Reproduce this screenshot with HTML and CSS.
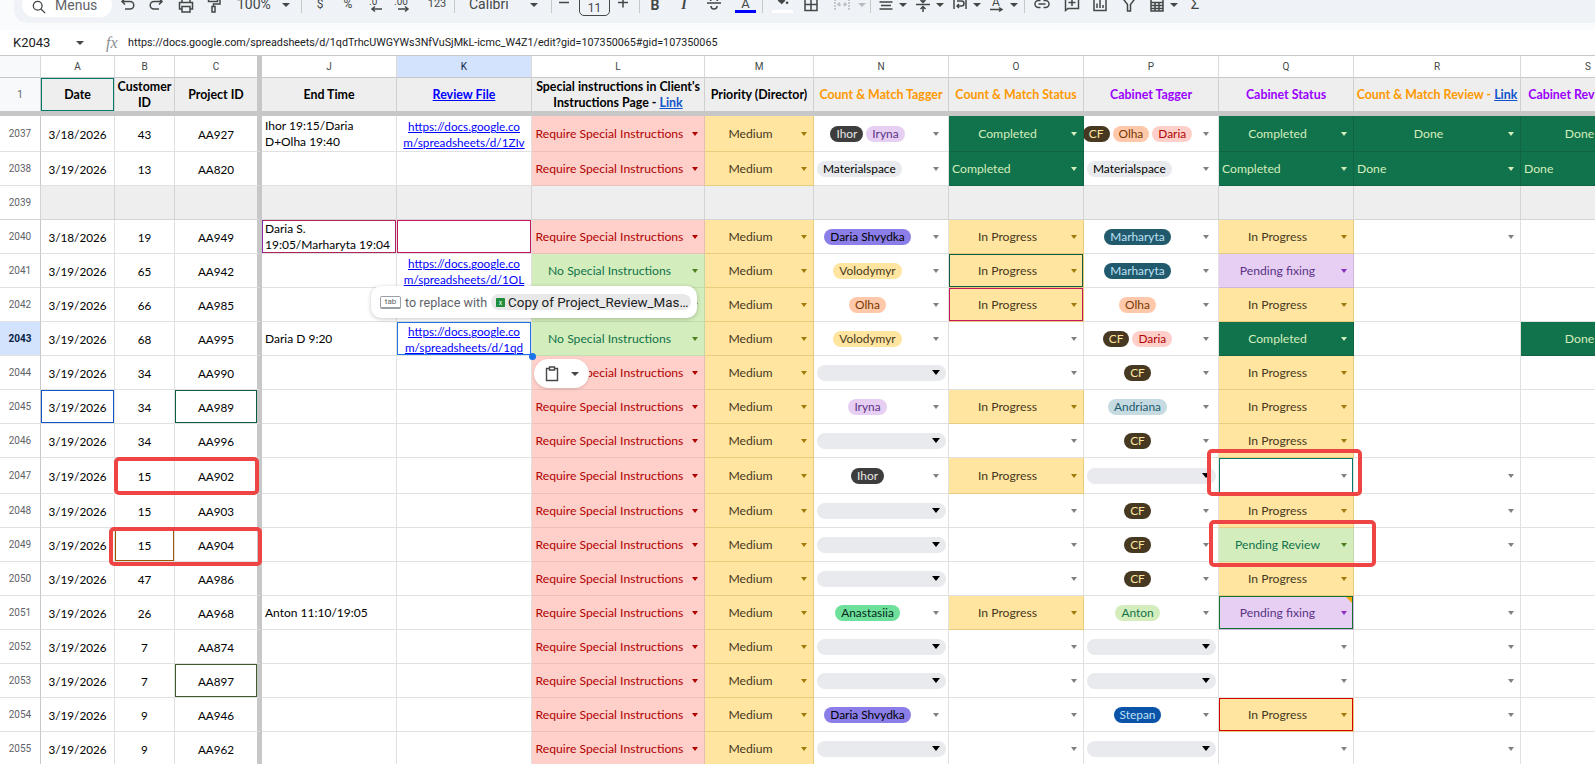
FILE: index.html
```html
<!DOCTYPE html>
<html lang="en">
<head>
<meta charset="utf-8">
<title>Project sheet</title>
<link rel="stylesheet" href="styles.css">
</head>
<body>
<div class="page">
  <div class="topzone">
    <div class="toolbar">
      <div class="pill"><svg class="ic" viewBox="0 0 16 16"><path d="M10.500 10.500L15 15M11.500 6.500a5 5 0 1 1-10 0a5 5 0 0 1 10 0z"/></svg><span>Menus</span></div>
      <svg class="ic" viewBox="0 0 16 16"><path d="M5 1.500L2 4.500L5 7.500M2 4.500H10a3.800 3.800 0 0 1 0 7.600H5"/></svg>
      <svg class="ic" viewBox="0 0 16 16"><path d="M11 1.500L14 4.500L11 7.500M14 4.500H6a3.800 3.800 0 0 0 0 7.600H11"/></svg>
      <svg class="ic" viewBox="0 0 16 16"><path d="M4 5V1h8v4M4 12H1.500V5.500h13V12H12M4 9.500h8V15H4z"/></svg>
      <svg class="ic" viewBox="0 0 16 16"><path d="M2.500 0.500h9v4h-9zM11.500 2.500h2.500v4.500H7.500v2.500M6 9.500h3v5.500H6z"/></svg>
      <span class="tt">100%</span>
      <i class="tv"></i>
      <i class="sep"></i>
      <span class="tt sm box16">$</span>
      <span class="tt sm box16">%</span>
      <svg class="ic wide" viewBox="0 0 20 16"><text x="4" y="8" class="svt">.0</text><path d="M17 12H7M10 9.500L7 12l3 2.500"/></svg>
      <svg class="ic wide" viewBox="0 0 20 16"><text x="1" y="8" class="svt">.00</text><path d="M5 12h10M12 9.500l3 2.500-3 2.500"/></svg>
      <span class="tt xs">123</span>
      <i class="sep"></i>
      <span class="tt">Calibri</span>
      <i class="tv"></i>
      <i class="sep"></i>
      <svg class="ic small" viewBox="0 0 12 16"><path d="M1 5.500h10"/></svg>
      <div class="fsize">11</div>
      <svg class="ic small" viewBox="0 0 12 16"><path d="M1 5.500h10M6 .5v10"/></svg>
      <i class="sep"></i>
      <b class="tl bold">B</b>
      <i class="tl ital">I</i>
      <svg class="ic" viewBox="0 0 16 16"><path d="M1 6h14M4.500 4c.5-3 6.500-3 7 0M5 9c0 4 6 4 6 0"/></svg>
      <div class="tcolor"><span>A</span><i class="bar blue"></i></div>
      <i class="sep"></i>
      <div class="tcolor wide"><svg class="ic" viewBox="0 0 16 16"><path class="fl" d="M5 0L1.500 4.500L6.500 9L11 4.500z"/><circle class="fl" cx="13" cy="7" r="1.600"/></svg><i class="bar white"></i></div>
      <svg class="ic" viewBox="0 0 16 16"><path d="M2 1.500h12v12H2zM2 7.500h12M8 1.500v12"/></svg>
      <svg class="ic off" viewBox="0 0 16 16"><path d="M2 3H1v9h1M14 3h1v9h-1M3 7.500h3.500M4.500 5.500l2 2-2 2M13 7.500H9.500M11.500 5.500l-2 2 2 2" stroke-dasharray="2 1"/></svg>
      <i class="tv off"></i>
      <i class="sep"></i>
      <svg class="ic" viewBox="0 0 16 16"><path d="M3 1.500h10M1.500 5h13M3 8.500h10M1.500 12h13"/></svg>
      <i class="tv"></i>
      <svg class="ic" viewBox="0 0 16 16"><path d="M1 7.500h14M8 0v5M5.500 3l2.500 2.500L10.500 3M8 15v-5M5.500 12l2.500-2.500 2.500 2.500"/></svg>
      <i class="tv"></i>
      <svg class="ic" viewBox="0 0 16 16"><path d="M2 0v12M14 0v12M5 4h4.500a2.500 2.500 0 0 1 0 5H5M7 7L5 9l2 2" /></svg>
      <i class="tv"></i>
      <svg class="ic" viewBox="0 0 16 16"><text x="3" y="9" class="svt big">A</text><path d="M1 12.500h11M10 10.500l3 2-3 2"/></svg>
      <i class="tv"></i>
      <i class="sep"></i>
      <svg class="ic" viewBox="0 0 16 16"><path d="M6.500 3.500H4.500a3.500 3.500 0 0 0 0 7h2M9.500 3.500h2a3.500 3.500 0 0 1 0 7h-2M4.500 7h7"/></svg>
      <svg class="ic" viewBox="0 0 16 16"><path d="M1.500 0v13.500L4 11.500h10.500V0M8 2v7M4.500 5.500h7"/></svg>
      <svg class="ic" viewBox="0 0 16 16"><path d="M2 0v13.500h12V0M5 11V6.500M8 11V3M11 11V8"/></svg>
      <svg class="ic" viewBox="0 0 16 16"><path d="M1.500 1L6.500 7.500V14h3V7.500L14.500 1z"/></svg>
      <svg class="ic" viewBox="0 0 16 16"><path d="M2 0h12v14H2zM2 5.500h12M2 8.500h12M2 11.500h12M6 5.500v8.500M10 5.500v8.500"/></svg>
      <i class="tv"></i>
      <span class="tt sigma">Σ</span>
    </div>
  </div>
  <div class="fbar">
    <span class="nm">K2043</span>
    <i class="tv"></i>
    <i class="fx">fx</i>
    <span class="url">https://docs.google.com/spreadsheets/d/1qdTrhcUWGYWs3NfVuSjMkL-icmc_W4Z1/edit?gid=107350065#gid=107350065</span>
  </div>
  <div class="sheet">
    <div class="row lets">
      <div class="c rn corner"></div><div class="c">A</div><div class="c">B</div><div class="c fz">C</div><div class="c">J</div><div class="c on">K</div><div class="c">L</div><div class="c">M</div><div class="c">N</div><div class="c">O</div><div class="c">P</div><div class="c">Q</div><div class="c">R</div><div class="c">S</div>
    </div>
    <div class="row hd">
      <div class="c rn">1</div><div class="c cur-a">Date</div><div class="c"><span>Customer<br>ID</span></div><div class="c fz">Project ID</div><div class="c">End Time</div><div class="c"><a>Review File</a></div><div class="c"><span>Special instructions in Client's<br>Instructions Page - <a class="lk">Link</a></span></div><div class="c">Priority (Director)</div><div class="c or">Count &amp; Match Tagger</div><div class="c or">Count &amp; Match Status</div><div class="c pu">Cabinet Tagger</div><div class="c pu">Cabinet Status</div><div class="c or"><span>Count &amp; Match Review - <a class="lk">Link</a></span></div><div class="c pu"><span>Cabinet Review - <a class="lk">Link</a></span></div>
    </div>
    <div class="hbar"></div>

    <div class="row first">
      <div class="c rn">2037</div><div class="c m">3/18/2026</div><div class="c m">43</div><div class="c m fz">AA927</div><div class="c tx"><span>Ihor 19:15/Daria<br>D+Olha 19:40</span></div><div class="c lnk"><a>https://docs.google.co<br>m/spreadsheets/d/1ZIv</a></div>
      <div class="c dd req"><span>Require Special Instructions</span><i class="v"></i></div><div class="c dd med"><span>Medium</span><i class="v"></i></div>
      <div class="c dd ch"><div class="chips"><b class="chip ihor">Ihor</b><b class="chip iry">Iryna</b></div><i class="v"></i></div>
      <div class="c dd ok"><span>Completed</span><i class="v"></i></div>
      <div class="c dd ch"><div class="chips"><b class="chip cf">CF</b><b class="chip olh">Olha</b><b class="chip dar">Daria</b></div><i class="v"></i></div>
      <div class="c dd ok"><span>Completed</span><i class="v"></i></div><div class="c dd ok"><span>Done</span><i class="v"></i></div><div class="c dd ok"><span>Done</span><i class="v"></i></div>
    </div>
    <div class="row">
      <div class="c rn">2038</div><div class="c m">3/19/2026</div><div class="c m">13</div><div class="c m fz">AA820</div><div class="c"></div><div class="c"></div>
      <div class="c dd req"><span>Require Special Instructions</span><i class="v"></i></div><div class="c dd med"><span>Medium</span><i class="v"></i></div>
      <div class="c dd ch lft"><div class="chips"><b class="chip mat">Materialspace</b></div><i class="v"></i></div>
      <div class="c dd ok lft"><span>Completed</span><i class="v"></i></div>
      <div class="c dd ch lft"><div class="chips"><b class="chip mat">Materialspace</b></div><i class="v"></i></div>
      <div class="c dd ok lft"><span>Completed</span><i class="v"></i></div><div class="c dd ok lft"><span>Done</span><i class="v"></i></div><div class="c dd ok lft"><span>Done</span><i class="v"></i></div>
    </div>
    <div class="row gray">
      <div class="c rn">2039</div><div class="c"></div><div class="c"></div><div class="c fz"></div><div class="c"></div><div class="c"></div><div class="c"></div><div class="c"></div><div class="c"></div><div class="c"></div><div class="c"></div><div class="c"></div><div class="c"></div><div class="c"></div>
    </div>
    <div class="row">
      <div class="c rn">2040</div><div class="c m">3/18/2026</div><div class="c m">19</div><div class="c m fz">AA949</div><div class="c tx mark-pl"><span>Daria S.<br>19:05/Marharyta 19:04</span></div><div class="c mark-cr"></div>
      <div class="c dd req"><span>Require Special Instructions</span><i class="v"></i></div><div class="c dd med"><span>Medium</span><i class="v"></i></div>
      <div class="c dd ch"><div class="chips"><b class="chip shv">Daria Shvydka</b></div><i class="v"></i></div>
      <div class="c dd med"><span>In Progress</span><i class="v"></i></div>
      <div class="c dd ch"><div class="chips"><b class="chip mar">Marharyta</b></div><i class="v"></i></div>
      <div class="c dd med"><span>In Progress</span><i class="v"></i></div><div class="c dd"><span></span><i class="v"></i></div><div class="c"></div>
    </div>
    <div class="row">
      <div class="c rn">2041</div><div class="c m">3/19/2026</div><div class="c m">65</div><div class="c m fz">AA942</div><div class="c"></div><div class="c lnk"><a>https://docs.google.co<br>m/spreadsheets/d/1OL</a></div>
      <div class="c dd no"><span>No Special Instructions</span><i class="v"></i></div><div class="c dd med"><span>Medium</span><i class="v"></i></div>
      <div class="c dd ch"><div class="chips"><b class="chip vol">Volodymyr</b></div><i class="v"></i></div>
      <div class="c dd med mark-dg"><span>In Progress</span><i class="v"></i></div>
      <div class="c dd ch"><div class="chips"><b class="chip mar">Marharyta</b></div><i class="v"></i></div>
      <div class="c dd fix"><span>Pending fixing</span><i class="v"></i></div><div class="c"></div><div class="c"></div>
    </div>
    <div class="row">
      <div class="c rn">2042</div><div class="c m">3/19/2026</div><div class="c m">66</div><div class="c m fz">AA985</div><div class="c"></div><div class="c"></div>
      <div class="c dd no"><span>No Special Instructions</span><i class="v"></i></div><div class="c dd med"><span>Medium</span><i class="v"></i></div>
      <div class="c dd ch"><div class="chips"><b class="chip olh">Olha</b></div><i class="v"></i></div>
      <div class="c dd med mark-cr"><span>In Progress</span><i class="v"></i></div>
      <div class="c dd ch"><div class="chips"><b class="chip olh">Olha</b></div><i class="v"></i></div>
      <div class="c dd med"><span>In Progress</span><i class="v"></i></div><div class="c"></div><div class="c"></div>
    </div>
    <div class="row sel">
      <div class="c rn">2043</div><div class="c m">3/19/2026</div><div class="c m">68</div><div class="c m fz">AA995</div><div class="c tx">Daria D 9:20</div><div class="c lnk mark-bl"><a>https://docs.google.co<br>m/spreadsheets/d/1qd</a></div>
      <div class="c dd no"><span>No Special Instructions</span><i class="v"></i></div><div class="c dd med"><span>Medium</span><i class="v"></i></div>
      <div class="c dd ch"><div class="chips"><b class="chip vol">Volodymyr</b></div><i class="v"></i></div>
      <div class="c dd"><span></span><i class="v"></i></div>
      <div class="c dd ch"><div class="chips"><b class="chip cf">CF</b><b class="chip dar">Daria</b></div><i class="v"></i></div>
      <div class="c dd ok"><span>Completed</span><i class="v"></i></div><div class="c"></div><div class="c dd ok"><span>Done</span><i class="v"></i></div>
    </div>
    <div class="row">
      <div class="c rn">2044</div><div class="c m">3/19/2026</div><div class="c m">34</div><div class="c m fz">AA990</div><div class="c"></div><div class="c"></div>
      <div class="c dd req"><span>Require Special Instructions</span><i class="v"></i></div><div class="c dd med"><span>Medium</span><i class="v"></i></div>
      <div class="c blank"><div class="epill"><i class="v"></i></div></div>
      <div class="c dd"><span></span><i class="v"></i></div>
      <div class="c dd ch"><div class="chips"><b class="chip cf">CF</b></div><i class="v"></i></div>
      <div class="c dd med"><span>In Progress</span><i class="v"></i></div><div class="c"></div><div class="c"></div>
    </div>
    <div class="row">
      <div class="c rn">2045</div><div class="c m mark-nv">3/19/2026</div><div class="c m">34</div><div class="c m fz mark-dg">AA989</div><div class="c"></div><div class="c"></div>
      <div class="c dd req"><span>Require Special Instructions</span><i class="v"></i></div><div class="c dd med"><span>Medium</span><i class="v"></i></div>
      <div class="c dd ch"><div class="chips"><b class="chip iry">Iryna</b></div><i class="v"></i></div>
      <div class="c dd med"><span>In Progress</span><i class="v"></i></div>
      <div class="c dd ch"><div class="chips"><b class="chip and">Andriana</b></div><i class="v"></i></div>
      <div class="c dd med"><span>In Progress</span><i class="v"></i></div><div class="c"></div><div class="c"></div>
    </div>
    <div class="row">
      <div class="c rn">2046</div><div class="c m">3/19/2026</div><div class="c m">34</div><div class="c m fz">AA996</div><div class="c"></div><div class="c"></div>
      <div class="c dd req"><span>Require Special Instructions</span><i class="v"></i></div><div class="c dd med"><span>Medium</span><i class="v"></i></div>
      <div class="c blank"><div class="epill"><i class="v"></i></div></div>
      <div class="c dd"><span></span><i class="v"></i></div>
      <div class="c dd ch"><div class="chips"><b class="chip cf">CF</b></div><i class="v"></i></div>
      <div class="c dd med"><span>In Progress</span><i class="v"></i></div><div class="c"></div><div class="c"></div>
    </div>
    <div class="row tall">
      <div class="c rn">2047</div><div class="c m">3/19/2026</div><div class="c m">15</div><div class="c m fz">AA902</div><div class="c"></div><div class="c"></div>
      <div class="c dd req"><span>Require Special Instructions</span><i class="v"></i></div><div class="c dd med"><span>Medium</span><i class="v"></i></div>
      <div class="c dd ch"><div class="chips"><b class="chip ihor">Ihor</b></div><i class="v"></i></div>
      <div class="c dd med"><span>In Progress</span><i class="v"></i></div>
      <div class="c blank"><div class="epill"><i class="v"></i></div></div>
      <div class="c dd mark-tl"><span></span><i class="v"></i></div><div class="c dd"><span></span><i class="v"></i></div><div class="c"></div>
    </div>
    <div class="row">
      <div class="c rn">2048</div><div class="c m">3/19/2026</div><div class="c m">15</div><div class="c m fz">AA903</div><div class="c"></div><div class="c"></div>
      <div class="c dd req"><span>Require Special Instructions</span><i class="v"></i></div><div class="c dd med"><span>Medium</span><i class="v"></i></div>
      <div class="c blank"><div class="epill"><i class="v"></i></div></div>
      <div class="c dd"><span></span><i class="v"></i></div>
      <div class="c dd ch"><div class="chips"><b class="chip cf">CF</b></div><i class="v"></i></div>
      <div class="c dd med"><span>In Progress</span><i class="v"></i></div><div class="c dd"><span></span><i class="v"></i></div><div class="c"></div>
    </div>
    <div class="row">
      <div class="c rn">2049</div><div class="c m">3/19/2026</div><div class="c m mark-br">15</div><div class="c m fz">AA904</div><div class="c"></div><div class="c"></div>
      <div class="c dd req"><span>Require Special Instructions</span><i class="v"></i></div><div class="c dd med"><span>Medium</span><i class="v"></i></div>
      <div class="c blank"><div class="epill"><i class="v"></i></div></div>
      <div class="c dd"><span></span><i class="v"></i></div>
      <div class="c dd ch"><div class="chips"><b class="chip cf">CF</b></div><i class="v"></i></div>
      <div class="c dd no"><span>Pending Review</span><i class="v"></i></div><div class="c dd"><span></span><i class="v"></i></div><div class="c"></div>
    </div>
    <div class="row">
      <div class="c rn">2050</div><div class="c m">3/19/2026</div><div class="c m">47</div><div class="c m fz">AA986</div><div class="c"></div><div class="c"></div>
      <div class="c dd req"><span>Require Special Instructions</span><i class="v"></i></div><div class="c dd med"><span>Medium</span><i class="v"></i></div>
      <div class="c blank"><div class="epill"><i class="v"></i></div></div>
      <div class="c dd"><span></span><i class="v"></i></div>
      <div class="c dd ch"><div class="chips"><b class="chip cf">CF</b></div><i class="v"></i></div>
      <div class="c dd med"><span>In Progress</span><i class="v"></i></div><div class="c"></div><div class="c"></div>
    </div>
    <div class="row">
      <div class="c rn">2051</div><div class="c m">3/19/2026</div><div class="c m">26</div><div class="c m fz">AA968</div><div class="c tx">Anton 11:10/19:05</div><div class="c"></div>
      <div class="c dd req"><span>Require Special Instructions</span><i class="v"></i></div><div class="c dd med"><span>Medium</span><i class="v"></i></div>
      <div class="c dd ch"><div class="chips"><b class="chip ana">Anastasiia</b></div><i class="v"></i></div>
      <div class="c dd med"><span>In Progress</span><i class="v"></i></div>
      <div class="c dd ch"><div class="chips"><b class="chip ant">Anton</b></div><i class="v"></i></div>
      <div class="c dd fix mark-gn note"><span>Pending fixing</span><i class="v"></i></div><div class="c dd"><span></span><i class="v"></i></div><div class="c"></div>
    </div>
    <div class="row">
      <div class="c rn">2052</div><div class="c m">3/19/2026</div><div class="c m">7</div><div class="c m fz">AA874</div><div class="c"></div><div class="c"></div>
      <div class="c dd req"><span>Require Special Instructions</span><i class="v"></i></div><div class="c dd med"><span>Medium</span><i class="v"></i></div>
      <div class="c blank"><div class="epill"><i class="v"></i></div></div>
      <div class="c dd"><span></span><i class="v"></i></div>
      <div class="c blank"><div class="epill"><i class="v"></i></div></div>
      <div class="c dd"><span></span><i class="v"></i></div><div class="c dd"><span></span><i class="v"></i></div><div class="c"></div>
    </div>
    <div class="row">
      <div class="c rn">2053</div><div class="c m">3/19/2026</div><div class="c m">7</div><div class="c m fz mark-ol">AA897</div><div class="c"></div><div class="c"></div>
      <div class="c dd req"><span>Require Special Instructions</span><i class="v"></i></div><div class="c dd med"><span>Medium</span><i class="v"></i></div>
      <div class="c blank"><div class="epill"><i class="v"></i></div></div>
      <div class="c dd"><span></span><i class="v"></i></div>
      <div class="c blank"><div class="epill"><i class="v"></i></div></div>
      <div class="c dd"><span></span><i class="v"></i></div><div class="c dd"><span></span><i class="v"></i></div><div class="c"></div>
    </div>
    <div class="row">
      <div class="c rn">2054</div><div class="c m">3/19/2026</div><div class="c m">9</div><div class="c m fz">AA946</div><div class="c"></div><div class="c"></div>
      <div class="c dd req"><span>Require Special Instructions</span><i class="v"></i></div><div class="c dd med"><span>Medium</span><i class="v"></i></div>
      <div class="c dd ch"><div class="chips"><b class="chip shv">Daria Shvydka</b></div><i class="v"></i></div>
      <div class="c dd"><span></span><i class="v"></i></div>
      <div class="c dd ch"><div class="chips"><b class="chip ste">Stepan</b></div><i class="v"></i></div>
      <div class="c dd med mark-rd"><span>In Progress</span><i class="v"></i></div><div class="c dd"><span></span><i class="v"></i></div><div class="c"></div>
    </div>
    <div class="row">
      <div class="c rn">2055</div><div class="c m">3/19/2026</div><div class="c m">9</div><div class="c m fz">AA962</div><div class="c"></div><div class="c"></div>
      <div class="c dd req"><span>Require Special Instructions</span><i class="v"></i></div><div class="c dd med"><span>Medium</span><i class="v"></i></div>
      <div class="c blank"><div class="epill"><i class="v"></i></div></div>
      <div class="c dd"><span></span><i class="v"></i></div>
      <div class="c blank"><div class="epill"><i class="v"></i></div></div>
      <div class="c dd"><span></span><i class="v"></i></div><div class="c dd"><span></span><i class="v"></i></div><div class="c"></div>
    </div>
  </div>

  <div class="hint">
    <span class="key">tab</span>
    <span class="hint-t">to replace with</span>
    <span class="file"><svg class="xl" viewBox="0 0 13 13"><rect width="13" height="13" rx="1"/><text x="6.500" y="10" text-anchor="middle">x</text></svg><span>Copy of Project_Review_Mas…</span></span>
  </div>
  <div class="paste">
    <svg class="clip" viewBox="0 0 16 16"><path d="M5.500 2.500H2.500v12h11v-12h-3M5.500 1h5v3h-5z"/></svg>
    <i class="tv"></i>
  </div>
  <i class="dot"></i>
  <i class="rbox r1"></i>
  <i class="rbox r2"></i>
  <i class="rbox r3"></i>
  <i class="rbox r4"></i>
</div>
</body>
</html>
```
FILE: styles.css
```css
* { box-sizing: border-box; }
html, body { margin: 0; padding: 0; background: #fff; overflow: hidden; }
.page { position: relative; width: 1595px; height: 764px; overflow: hidden; font-family: Lato, "Open Sans", sans-serif; font-size: 11.700px; color: #000; }

/* toolbar */
.topzone { height: 30px; background: #f9fbfd; padding-left: 14px; }
.toolbar { height: 23px; background: #eff3f8; border-bottom-left-radius: 13px; padding-left: 8px; overflow: hidden; display: grid; align-items: start; justify-items: start;
  grid-template-columns: 98px 28px 30px 28px 31px 45px 19px 11px 28px 25px 28px 33px 28px 15px 61px 21px 7px 21px 38px 22px 8px 29px 30px 29px 27px 10px 31px 31px 24px 12px 8px 21px 16px 21px 16px 21px 16px 21px 14px 10px 30px 28px 29px 28px 21px 17px 16px; }
.toolbar > * { margin-top: -3px; }
.ic { width: 16px; height: 16px; fill: none; stroke: #444746; stroke-width: 1.500; display: block; }
.ic.wide { width: 20px; margin-left: 0; }
.ic.small { width: 12px; }
.ic.off { stroke: #b9bcbf; }
.ic .fl { fill: #444746; stroke: none; }
.svt { font-family: Roboto, sans-serif; font-size: 10px; fill: #444746; stroke: none; }
.svt.big { font-size: 12px; }
.pill { width: 90px; height: 24px; margin-top: -7px !important; padding: 0 0 0 10px; background: #fff; border-radius: 12px; display: flex; align-items: center; gap: 9px; color: #5f6368; font-family: Roboto, sans-serif; font-size: 14px; }
.pill .ic { width: 14px; height: 14px; margin-top: 3px; }
.pill span { margin-top: -1px; }
.tt { font-family: Roboto, sans-serif; font-size: 14px; line-height: 16px; color: #444746; white-space: nowrap; }
.toolbar > .tt { margin-top: -4px; }
.tt.sm { font-size: 12px; }
.tt.xs { font-size: 11px; width: 22px; text-align: center; }
.tt.sigma { font-size: 15px; text-align: center; width: 16px; }
.box16 { width: 16px; text-align: center; }
.tv { display: block; width: 0; height: 0; margin-top: 3px; border-left: 4px solid transparent; border-right: 4px solid transparent; border-top: 4px solid #444746; }
.toolbar > .tv { margin-top: 3px; }
.tv.off { border-top-color: #b9bcbf; }
.sep { display: block; width: 1px; height: 20px; background: #c7c7c7; }
.toolbar > .sep { margin-top: 0; height: 13px; }
.fsize { width: 31px; height: 19px; padding-top: 3px; border: 1px solid #444746; border-radius: 0 0 5px 5px; text-align: center; font-family: Roboto, sans-serif; font-size: 12px; line-height: 14px; color: #444746; }
.tl { width: 16px; text-align: center; font-family: "Liberation Serif", serif; font-size: 14px; line-height: 16px; color: #444746; }
.bold { font-family: Roboto, sans-serif; font-weight: 700; }
.ital { font-style: italic; font-weight: 700; }
.tcolor { width: 21px; height: 16px; text-align: center; font-family: Roboto, sans-serif; font-size: 13px; line-height: 14px; color: #444746; display: flex; flex-direction: column; align-items: center; }
.tcolor span { height: 13px; }
.tcolor.wide .ic { height: 13px; flex: none; }
.bar { display: block; width: 21px; height: 3px; flex: none; }
.bar.blue { background: #0000ff; }
.bar.white { background: #fff; }

/* formula bar */
.fbar { height: 25px; display: flex; align-items: center; padding-left: 13px; font-family: Roboto, sans-serif; color: #202124; }
.nm { font-size: 13px; width: 63px; }
.fbar .tv { margin-top: 0; }
.fx { margin-left: 22px; width: 22px; font-family: "Liberation Serif", serif; font-size: 16px; color: #8a8d91; }
.url { font-size: 10.750px; color: #202124; white-space: nowrap; }

/* sheet */
.sheet { border-top: 1px solid #c7c7c7; }
.row { display: grid; grid-template-columns: 41px 74px 60px 87px 135px 135px 173px 109px 135px 135px 135px 135px 167px 135px; height: 34px; width: 1656px; }
.row.first { height: 36px; }
.row.tall { height: 36px; }
.c { border-right: 1px solid #e1e1e1; border-bottom: 1px solid #e1e1e1; min-width: 0; overflow: hidden; padding-top: 1px; display: flex; align-items: center; justify-content: center; text-align: center; line-height: 16px; white-space: nowrap; background: #fff; }
.c.fz { border-right: 5px solid #c7c7c7; }
.rn { border-right: 1px solid #c7c7c7; font-family: Roboto, sans-serif; font-size: 10px; color: #5f6368; padding-top: 0; }
.row.sel .rn { background: #d3e3fd; color: #0b1f44; font-weight: 700; }
.lets { height: 22px; font-family: Roboto, sans-serif; font-size: 10px; color: #444746; }
.lets .c { border-bottom: 1px solid #c7c7c7; border-right-color: #dadada; padding-top: 0; }
.lets .c.fz { border-right-color: #c7c7c7; }
.lets .corner { background: #f8f9fa; }
.lets .on { background: #d3e3fd; color: #0b1f44; }
.hd { height: 33px; font-family: Lato, "Open Sans", sans-serif; font-weight: 700; font-size: 12.400px; }
.hd .c { background: #eeeeee; border-right-color: #d0d0d0; border-bottom: 0; line-height: 16px; }
.hd .c.fz { border-right-color: #c7c7c7; }
.hd .rn { background: #f8f9fa; border-right-color: #c7c7c7; font-family: Roboto, sans-serif; font-weight: 400; font-size: 10px; color: #5f6368; }
.hd a { color: #0000ff; text-decoration: underline; }
.hd a.lk { color: #1155cc; }
.or { color: #ff9900; }
.pu { color: #9900ff; }
.cur-a { box-shadow: inset 0 0 0 1px #00796b; }
.hbar { height: 5px; background: #c7c7c7; }
.gray .c { background: #eeeeee; border-right-color: #d4d4d4; border-bottom-color: #d4d4d4; }
.gray .c.fz { border-right-color: #c7c7c7; }
.gray .rn { background: #fff; }
.tx { justify-content: flex-start; text-align: left; padding-left: 3px; font-size: 12px; }
.lnk a { color: #0000ff; text-decoration: underline; }

/* dropdown cells */
.dd { justify-content: flex-end; }
.dd > span { flex: 1; min-width: 0; text-align: center; white-space: nowrap; font-size: 12.200px; }
.v { display: block; flex: none; width: 0; height: 0; margin: 0 6px 0 5px; border-left: 3.500px solid transparent; border-right: 3.500px solid transparent; border-top: 4px solid #808080; }
.ch .v { margin: 0 9px 0 12px; }
.req { background: #ffcfc9; color: #b10202; border-right-color: #e6bcb6; border-bottom-color: #ecc1bb; }
.req .v { border-top-color: #b10202; }
.no { background: #d4edbc; color: #11734b; border-right-color: #bfd7a9; border-bottom-color: #c4dcae; }
.no .v { border-top-color: #4b7f1f; }
.med { background: #ffe5a0; color: #473821; border-right-color: #e8cb7f; border-bottom-color: #e8cb7f; }
.med .v { border-top-color: #a07b0b; }
.ok { background: #11734b; color: #d4edbc; border-right-color: #0f6543; border-bottom-color: #0f6543; }
.ok .v { border-top-color: #d4edbc; }
.fix { background: #e6cff2; color: #5a3286; border-right-color: #cdb6da; border-bottom-color: #cdb6da; }
.fix .v { border-top-color: #8a2fc0; }
.ok.lft > span { text-align: left; padding-left: 3px; }
.chips { flex: 1; min-width: 0; display: flex; justify-content: center; gap: 3px; }
.lft .chips { justify-content: flex-start; padding-left: 3px; }
.chip { display: block; height: 16px; line-height: 16px; padding: 0 6px; border-radius: 8px; font-weight: 400; font-size: 11.900px; }
.ihor { background: #3d3d3d; color: #e5e5e5; }
.iry { background: #e6cff2; color: #5a3286; }
.cf { background: #473821; color: #ffe5a0; }
.olh { background: #ffc8aa; color: #753800; }
.dar { background: #ffcfc9; color: #b10202; }
.mat { background: #e8eaed; color: #000; }
.shv { background: #8b7ee8; color: #000; }
.mar { background: #215a6c; color: #bfe1f6; }
.vol { background: #ffe5a0; color: #473821; }
.and { background: #c6dbe1; color: #215a6c; }
.ana { background: #6ee09b; color: #06281a; }
.ant { background: #d4edbc; color: #11734b; }
.ste { background: #0a53a8; color: #bfe1f6; }
.blank { padding: 0 2px 0 3px; justify-content: flex-start; }
.epill { width: 129px; height: 16px; border-radius: 8px; background: #e8eaed; display: flex; align-items: center; justify-content: flex-end; }
.epill .v { margin: 0 6px 0 0; border-left-width: 4px; border-right-width: 4px; border-top: 5px solid #000; }

/* collaborator / selection borders */
.mark-pl { box-shadow: inset 1px 0 0 #8e24aa, inset 0 0 0 1px #b0245c; }
.mark-cr { box-shadow: inset 0 0 0 1px #c2185b; }
.mark-dg { box-shadow: inset 0 0 0 1px #0f5c46; }
.mark-gn { box-shadow: inset 0 0 0 1px #137333; }
.mark-bl { box-shadow: inset 0 0 0 1px #1a73e8; }
.mark-nv { box-shadow: inset 0 0 0 1px #1155cc; }
.mark-tl { box-shadow: inset 0 0 0 1px #00796b; }
.mark-br { box-shadow: inset 0 0 0 1px #9c5700; }
.mark-ol { box-shadow: inset 0 0 0 1px #3f5b2c; }
.mark-rd { box-shadow: inset 0 0 0 1px #d50000; }
.note { position: relative; }
.note::after { content: ""; position: absolute; top: 1px; right: 1px; border-top: 6px solid #f5a800; border-left: 6px solid transparent; }

/* overlays */
.hint { position: absolute; left: 371px; top: 286px; width: 326px; height: 32px; padding: 0 6px 0 9px; display: flex; align-items: center; gap: 4px; background: #fff; border-radius: 10px; box-shadow: 0 1px 4px rgba(0,0,0,.22); font-family: Roboto, sans-serif; }
.key { width: 21px; height: 13px; flex: none; border: 1px solid #9aa0a6; border-bottom-width: 2px; border-radius: 2px; font-size: 8px; line-height: 10px; text-align: center; color: #5f6368; }
.hint-t { font-size: 12.600px; color: #5f6368; white-space: nowrap; }
.file { display: flex; align-items: center; gap: 3px; height: 16px; width: 202px; padding-left: 5px; border-radius: 8px; background: #e8e8e8; font-size: 13.400px; color: #202124; white-space: nowrap; overflow: hidden; }
.xl { width: 9px; height: 9px; flex: none; }
.xl rect { fill: #1e8e3e; }
.xl text { font-family: Roboto, sans-serif; font-size: 10px; fill: #fff; }
.paste { position: absolute; left: 534px; top: 359px; width: 55px; height: 29px; padding-left: 10px; display: flex; align-items: center; gap: 11px; background: #fff; border-radius: 15px; box-shadow: 0 1px 3px rgba(0,0,0,.15); }
.clip { width: 16px; height: 16px; fill: none; stroke: #444746; stroke-width: 1.400; }
.paste .tv { margin-top: 0; }
.dot { position: absolute; left: 529px; top: 353px; width: 7px; height: 7px; border-radius: 50%; background: #1a73e8; }
.rbox { position: absolute; border: 4px solid #ef4444; border-radius: 5px; }
.r1 { left: 114px; top: 457px; width: 145px; height: 38px; }
.r2 { left: 109px; top: 527px; width: 153px; height: 39px; }
.r3 { left: 1207px; top: 449px; width: 155px; height: 47px; }
.r4 { left: 1209px; top: 520px; width: 167px; height: 47px; }
```
